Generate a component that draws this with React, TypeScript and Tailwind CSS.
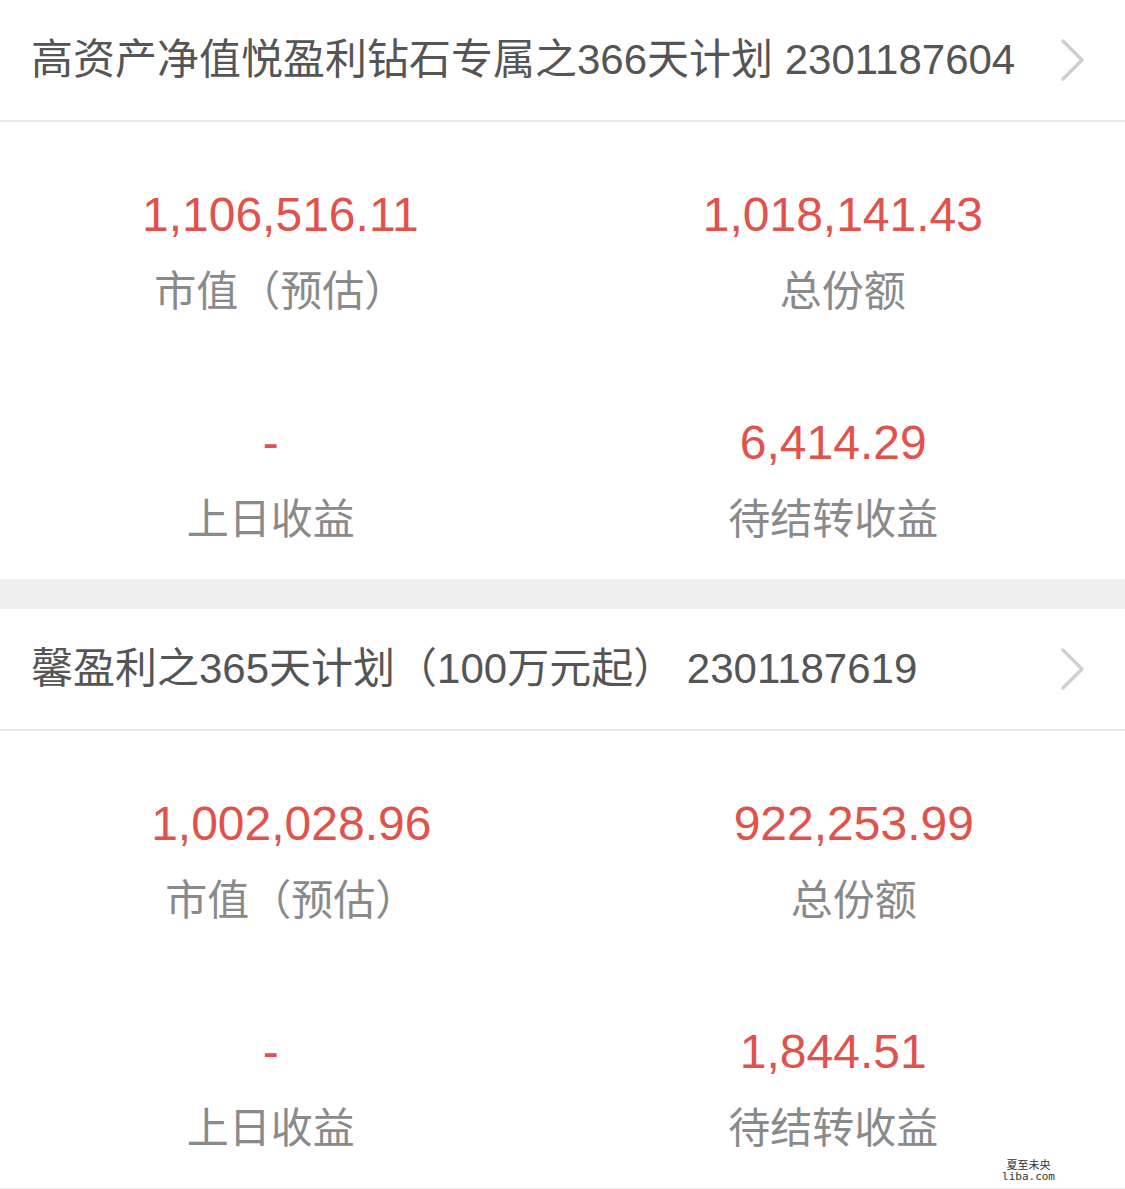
import React from "react";

const FONT = { fontFamily: '"Liberation Sans", "Noto Sans CJK SC", sans-serif' };

type Cell = { value: string; label: string };

function Chevron() {
  return (
    <svg width="26" height="42" viewBox="0 0 26 42" className="shrink-0">
      <path d="M4 2 L23 21 L4 40" fill="none" stroke="#cfcfcf" strokeWidth="3.5" strokeLinecap="round" strokeLinejoin="round" />
    </svg>
  );
}

function Row({ cells }: { cells: Cell[] }) {
  return (
    <div className="flex justify-around">
      {cells.map((c, i) => (
        <div key={i} className="flex flex-col items-center text-center">
          <div className="text-[48px] leading-[77px] text-[#e0524b] whitespace-nowrap">{c.value}</div>
          <div className="text-[42px] leading-[77px] text-[#8a8a8a] whitespace-nowrap">{c.label}</div>
        </div>
      ))}
    </div>
  );
}

function Section({ title, rows, last }: { title: string; rows: Cell[][]; last?: boolean }) {
  return (
    <div className={"bg-white " + (last ? "border-b-2 border-[#ececec]" : "")}>
      <div className="h-[122px] flex items-center justify-between pl-[31px] pr-[40px] border-b-2 border-[#e8e8e8]">
        <div className="text-[42px] leading-[50px] text-[#555555] whitespace-nowrap">{title}</div>
        <Chevron />
      </div>
      <div className="pt-[54px] pb-[21px] flex flex-col gap-[74px]">
        {rows.map((r, i) => (
          <Row key={i} cells={r} />
        ))}
      </div>
    </div>
  );
}

export default function App() {
  return (
    <div className="w-[1125px] h-[1189px] bg-white relative overflow-hidden" style={FONT}>
      <Section
        title="高资产净值悦盈利钻石专属之366天计划 2301187604"
        rows={[
          [
            { value: "1,106,516.11", label: "市值（预估）" },
            { value: "1,018,141.43", label: "总份额" },
          ],
          [
            { value: "-", label: "上日收益" },
            { value: "6,414.29", label: "待结转收益" },
          ],
        ]}
      />
      <div className="h-[30px] bg-[#efefef]" />
      <Section
        title="馨盈利之365天计划（100万元起） 2301187619"
        last
        rows={[
          [
            { value: "1,002,028.96", label: "市值（预估）" },
            { value: "922,253.99", label: "总份额" },
          ],
          [
            { value: "-", label: "上日收益" },
            { value: "1,844.51", label: "待结转收益" },
          ],
        ]}
      />
      <div className="absolute right-[70px] bottom-[6px] flex flex-col items-center text-[#333] leading-[12px]">
        <div className="text-[11px]">夏至未央</div>
        <div className="text-[11px]" style={{ fontFamily: '"DejaVu Sans Mono", monospace' }}>liba.com</div>
      </div>
    </div>
  );
}
